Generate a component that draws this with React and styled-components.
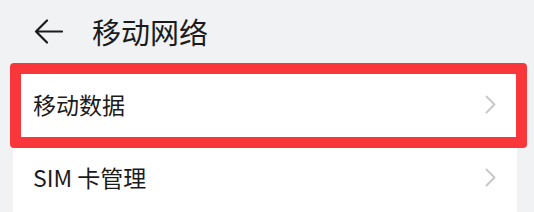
import styled, { createGlobalStyle } from "styled-components";

const GlobalStyle = createGlobalStyle`
  html, body {
    margin: 0;
    padding: 0;
    background: #f1f2f4;
    font-family: "Noto Sans CJK SC", "Noto Sans", sans-serif;
  }
`;

const Page = styled.div`
  width: 534px;
  height: 212px;
  overflow: hidden;
  background: #f1f2f4;
`;

const Header = styled.div`
  display: flex;
  align-items: center;
  height: 62px;
  padding-left: 34px;
  box-sizing: border-box;
`;

const BackButton = styled.div`
  display: flex;
  align-items: center;
  width: 29px;
  height: 25px;
  margin-right: 29px;
`;

const Title = styled.div`
  font-size: 29px;
  font-weight: 400;
  color: #1b1b1b;
  line-height: 1;
`;

const Card = styled.div`
  margin: 6px 0 0 13px;
  width: 504px;
  background: #ffffff;
  border-radius: 16px 16px 0 0;
`;

const Row = styled.div`
  position: relative;
  display: flex;
  align-items: center;
  justify-content: space-between;
  height: 73px;
  padding: 0 21px 0 20px;
  box-sizing: border-box;
`;

const Label = styled.div`
  font-size: 23px;
  color: #1b1b1b;
  line-height: 1;
`;

const Highlight = styled.div`
  position: absolute;
  top: -5px;
  left: -3px;
  width: 517px;
  height: 85px;
  border: 11px solid #f9373a;
  border-radius: 4px;
  box-sizing: border-box;
  pointer-events: none;
`;

const Chevron = () => (
  <svg width="11" height="19" viewBox="0 0 11 19">
    <path
      d="M1.5 1.5 L9.5 9.5 L1.5 17.5"
      fill="none"
      stroke="#c6c6c6"
      strokeWidth="1.8"
      strokeLinecap="round"
      strokeLinejoin="round"
    />
  </svg>
);

const items = [
  { label: "移动数据", selected: true },
  { label: "SIM 卡管理" },
];

export default function App() {
  return (
    <>
      <GlobalStyle />
      <Page>
        <Header>
          <BackButton>
            <svg width="29" height="25" viewBox="0 0 29 25">
              <path
                d="M28 12.5 H2 M13 1.5 L2 12.5 L13 23.5"
                fill="none"
                stroke="#1b1b1b"
                strokeWidth="2.2"
                strokeLinecap="round"
                strokeLinejoin="round"
              />
            </svg>
          </BackButton>
          <Title>移动网络</Title>
        </Header>
        <Card>
          {items.map((item) => (
            <Row key={item.label}>
              <Label>{item.label}</Label>
              <Chevron />
              {item.selected && <Highlight />}
            </Row>
          ))}
        </Card>
      </Page>
    </>
  );
}
